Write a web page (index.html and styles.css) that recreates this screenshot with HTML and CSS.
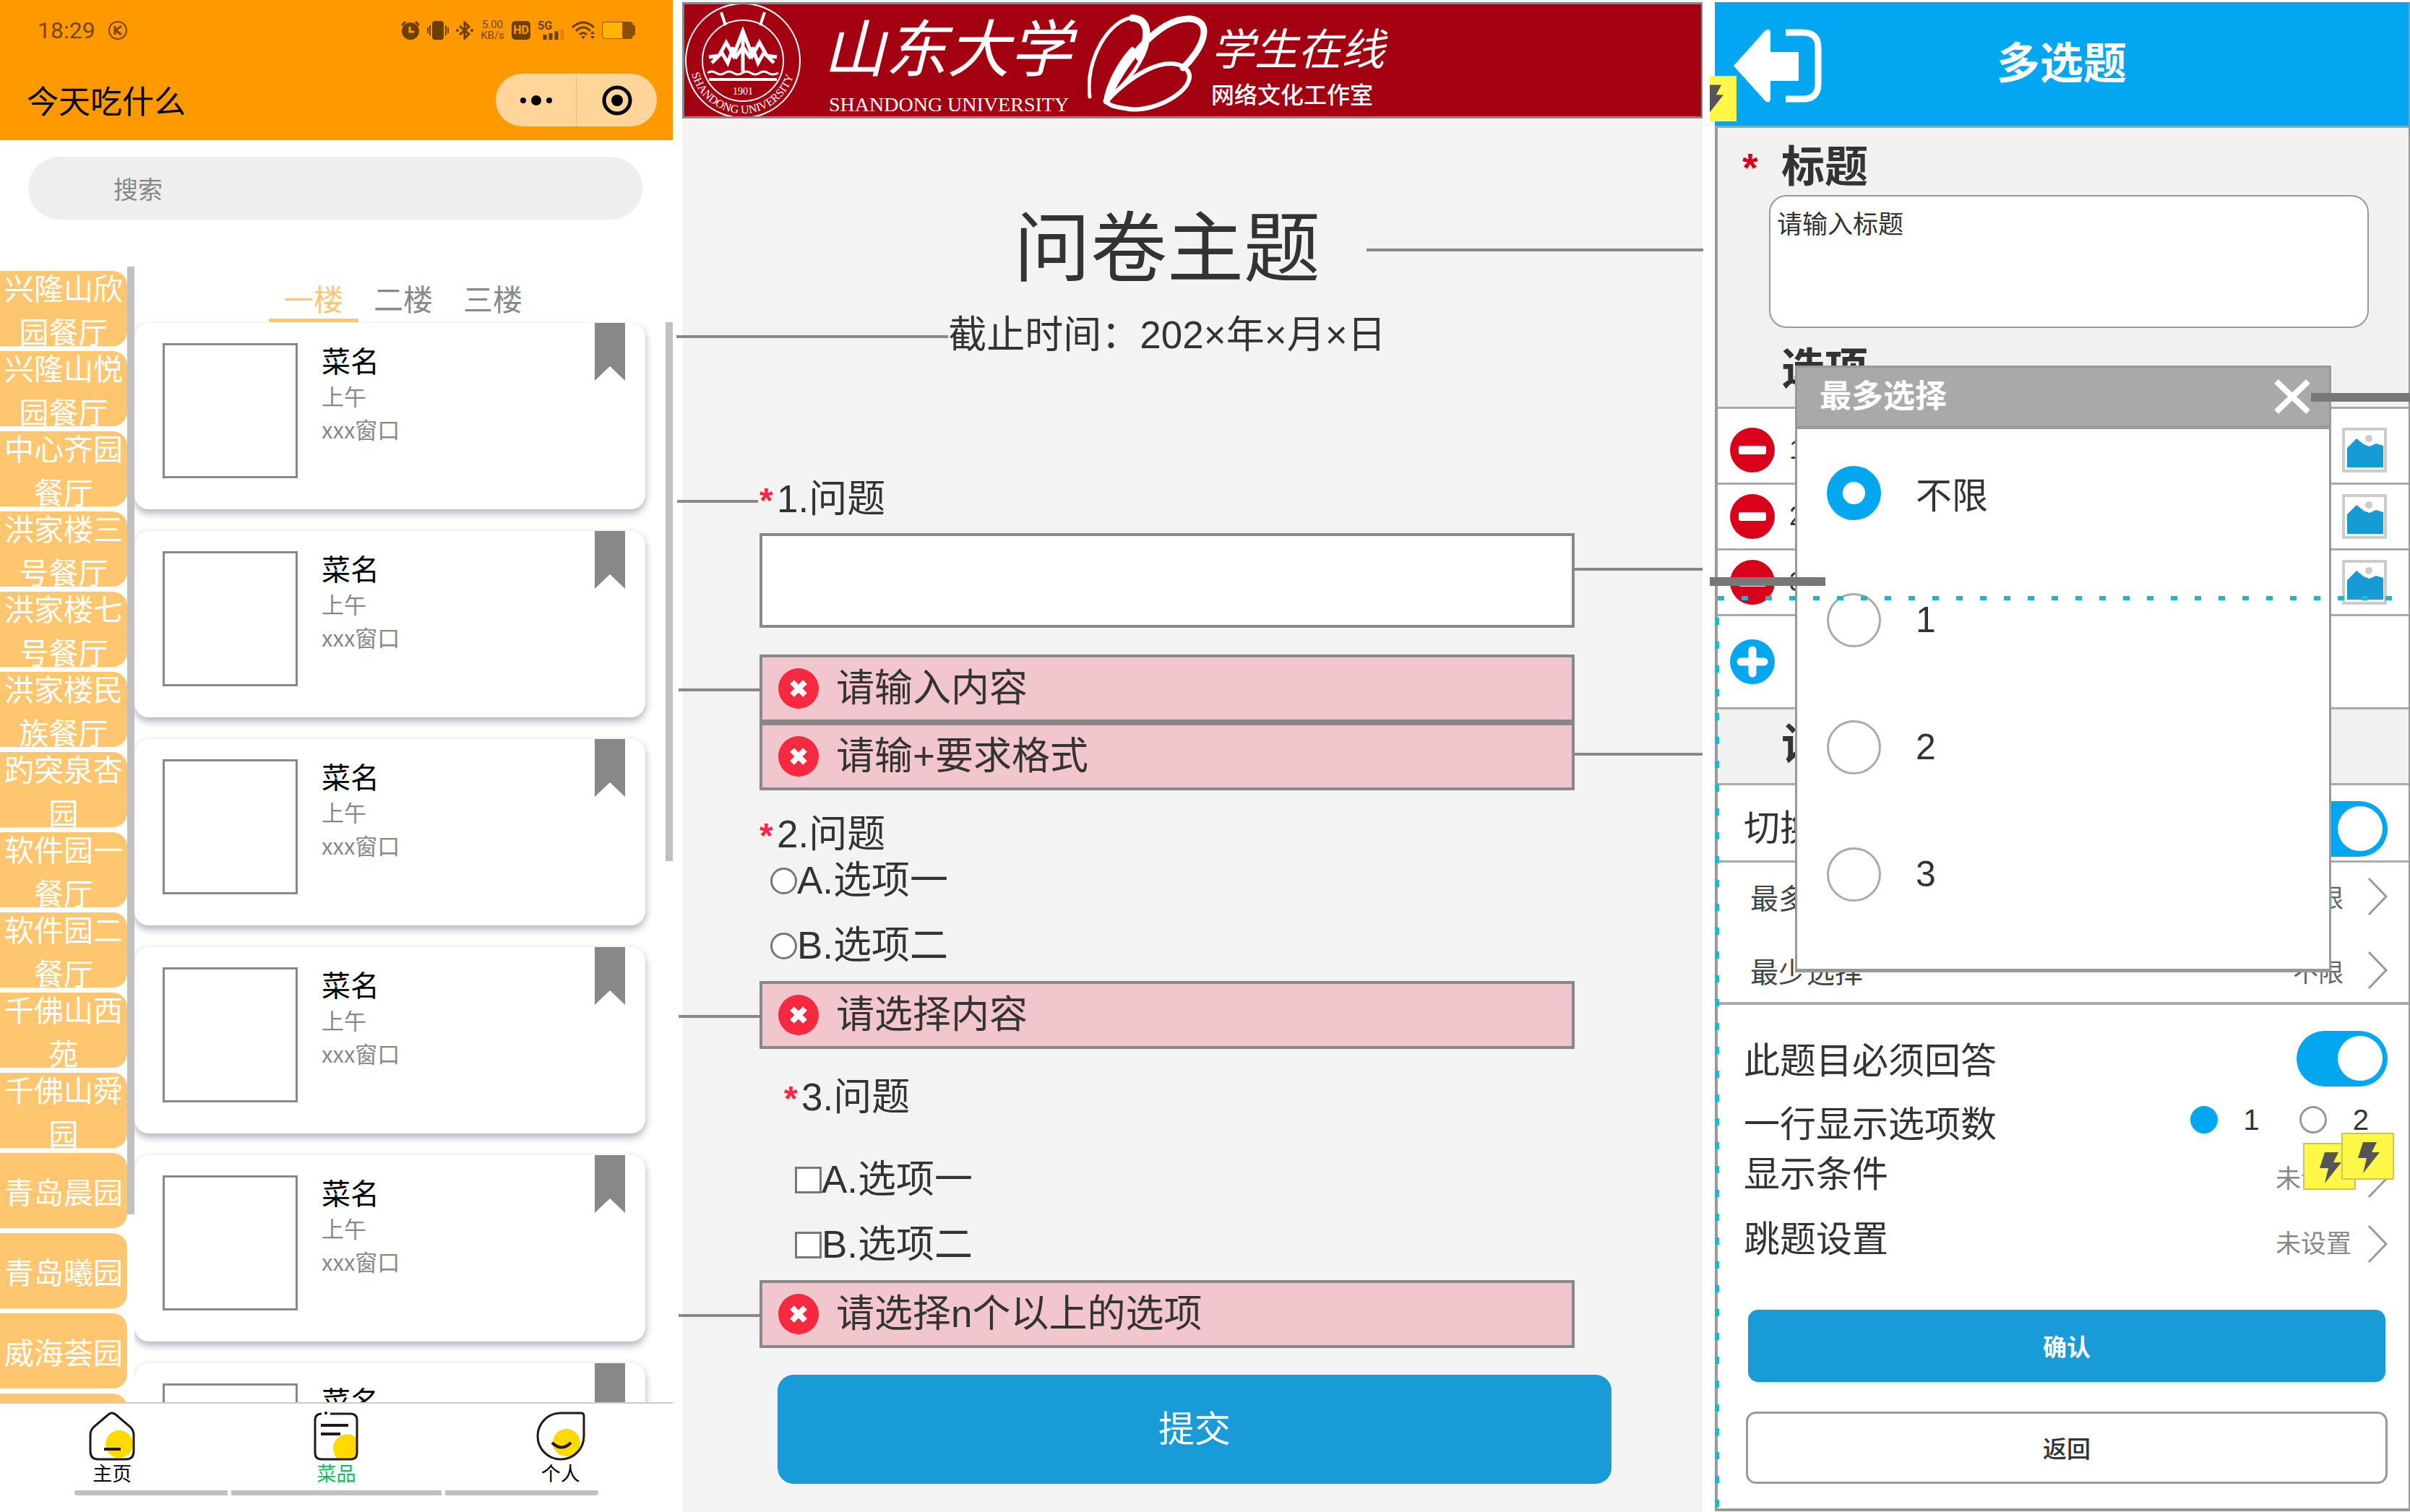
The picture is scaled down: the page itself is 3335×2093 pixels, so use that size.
FILE: index.html
```html
<!DOCTYPE html>
<html lang="zh-CN">
<head>
<meta charset="utf-8">
<title>今天吃什么 · 问卷 · 多选题</title>
<link rel="stylesheet" href="styles.css">
</head>
<body>
<svg class="defs" aria-hidden="true">
  <symbol id="mark" viewBox="0 0 42 80"><path d="M0 0H42V80L21 60L0 80Z" fill="#888"/></symbol>
  <symbol id="error" viewBox="0 0 56 56"><circle cx="28" cy="28" r="28" fill="#f5293f"/><path d="M19 19L37 37M37 19L19 37" stroke="#fff" stroke-width="8"/></symbol>
  <symbol id="minus" viewBox="0 0 62 62"><circle cx="31" cy="31" r="31" fill="#d9001b"/><rect x="12" y="25" width="38" height="12" rx="3" fill="#fff"/></symbol>
  <symbol id="plus" viewBox="0 0 62 62"><circle cx="31" cy="31" r="31" fill="#02a7f0"/><path d="M31 15V47M15 31H47" stroke="#fff" stroke-width="11" stroke-linecap="round"/></symbol>
  <symbol id="picture" viewBox="0 0 62 62"><rect x="2" y="2" width="58" height="58" fill="#fff" stroke="#ccc" stroke-width="4"/><path d="M7 55V28L20 15L30 23L38 26L47 22L57 25V55Z" fill="#169bd5"/><circle cx="37" cy="15" r="5" fill="#ccc"/></symbol>
  <symbol id="chevron" viewBox="0 0 28 52"><path d="M2 1L26 26L2 51" fill="none" stroke="#999" stroke-width="3"/></symbol>
  <symbol id="bolt" viewBox="0 0 73 65"><rect x="1" y="1" width="71" height="63" fill="#fff849" stroke="#c9c46a" stroke-width="2"/><path d="M30 13H49L42 27H53L30 56L35 35H23Z" fill="#555"/></symbol>
</svg>
<main class="board">

  <section class="dining">
    <header class="dining-top">
      <div class="status">
        <span class="clock">18:29</span>
        <svg width="26" height="26" viewBox="0 0 26 26" fill="none" stroke="#7a4500" stroke-width="2"><circle cx="13" cy="13" r="12"/><path d="M9 7V19M18 7L10 13L18 19" stroke-width="3"/></svg>
        <div class="status-icons">
          <svg width="26" height="26" viewBox="0 0 26 26"><circle cx="13" cy="14" r="12" fill="#6e3f00"/><path d="M1 6L6 1M25 6L20 1" stroke="#6e3f00" stroke-width="3"/><path d="M12 8V15H18" fill="none" stroke="#ff9900" stroke-width="3"/></svg>
          <svg width="30" height="26" viewBox="0 0 30 26"><rect x="7" width="16" height="26" rx="4" fill="#6e3f00"/><path d="M1 9V17M4 6V20M26 6V20M29 9V17" stroke="#6e3f00" stroke-width="2"/></svg>
          <svg width="24" height="26" viewBox="0 0 24 26"><path d="M5 7L18 18L12 24V2L18 8L5 19" fill="none" stroke="#6e3f00" stroke-width="3"/><circle cx="2" cy="13" r="2" fill="#6e3f00"/><circle cx="22" cy="13" r="2" fill="#6e3f00"/></svg>
          <span class="speed">5.00<br>KB/s</span>
          <span class="hd">HD</span>
          <svg width="37" height="26" viewBox="0 0 37 26"><text x="0" y="12" font-family="Roboto" font-weight="700" font-size="16" fill="#6e3f00">5G</text><path d="M10 26V19M18 26V17M26 26V14" stroke="#6e3f00" stroke-width="5"/><path d="M34 26V12" stroke="#e67f00" stroke-width="5"/></svg>
          <svg width="32" height="26" viewBox="0 0 32 26" fill="none" stroke="#6e3f00" stroke-width="3"><path d="M1 9Q16 -5 31 9M6 14Q16 4 26 14M11 19Q16 14 21 19"/><path d="M13 21H19L16 25Z" fill="#6e3f00" stroke="none"/><path d="M26 18L29 14L32 18ZM26 21L29 25L32 21Z" fill="#6e3f00" stroke="none"/></svg>
          <svg width="46" height="24" viewBox="0 0 46 24"><path d="M5 0H38Q43 0 43 5H46V19H43Q43 24 38 24H5Q0 24 0 19V5Q0 0 5 0Z" fill="#8c4f00"/><path d="M5 1H28V23H5Q1 23 1 19V5Q1 1 5 1Z" fill="#ffb400"/></svg>
        </div>
      </div>
      <div class="title-row">
        <h1>今天吃什么</h1>
        <div class="capsule">
          <button type="button" aria-label="更多"><svg width="44" height="16" viewBox="0 0 44 16"><circle cx="4" cy="8" r="4"/><circle cx="22" cy="8" r="7"/><circle cx="40" cy="8" r="4"/></svg></button>
          <button type="button" aria-label="关闭"><svg width="42" height="42" viewBox="0 0 42 42"><circle cx="21" cy="21" r="18" fill="none" stroke="#000" stroke-width="5"/><circle cx="21" cy="21" r="8"/></svg></button>
        </div>
      </div>
    </header>
    <input class="search" type="search" placeholder="搜索" aria-label="搜索">
    <div class="menu">
      <nav class="halls">
        <a href="#">兴隆山欣园餐厅</a>
        <a href="#">兴隆山悦园餐厅</a>
        <a href="#">中心齐园餐厅</a>
        <a href="#">洪家楼三号餐厅</a>
        <a href="#">洪家楼七号餐厅</a>
        <a href="#">洪家楼民族餐厅</a>
        <a href="#">趵突泉杏园</a>
        <a href="#">软件园一餐厅</a>
        <a href="#">软件园二餐厅</a>
        <a href="#">千佛山西苑</a>
        <a href="#">千佛山舜园</a>
        <a href="#">青岛晨园</a>
        <a href="#">青岛曦园</a>
        <a href="#">威海荟园</a>
        <a href="#" aria-label="更多餐厅"></a>
      </nav>
      <div class="dishes">
        <div class="tabs">
          <button type="button" class="tab on">一楼</button>
          <button type="button" class="tab">二楼</button>
          <button type="button" class="tab">三楼</button>
        </div>
        <div class="cards">
          <article class="card"><div class="thumb"></div><div><h2>菜名</h2><p>上午</p><p>xxx窗口</p></div><svg class="mark"><use href="#mark"/></svg></article>
          <article class="card"><div class="thumb"></div><div><h2>菜名</h2><p>上午</p><p>xxx窗口</p></div><svg class="mark"><use href="#mark"/></svg></article>
          <article class="card"><div class="thumb"></div><div><h2>菜名</h2><p>上午</p><p>xxx窗口</p></div><svg class="mark"><use href="#mark"/></svg></article>
          <article class="card"><div class="thumb"></div><div><h2>菜名</h2><p>上午</p><p>xxx窗口</p></div><svg class="mark"><use href="#mark"/></svg></article>
          <article class="card"><div class="thumb"></div><div><h2>菜名</h2><p>上午</p><p>xxx窗口</p></div><svg class="mark"><use href="#mark"/></svg></article>
          <article class="card"><div class="thumb"></div><div><h2>菜名</h2><p>上午</p><p>xxx窗口</p></div><svg class="mark"><use href="#mark"/></svg></article>
        </div>
      </div>
    </div>
    <footer class="tabbar">
      <nav>
        <a href="#"><svg width="66" height="70" viewBox="0 0 66 70"><circle cx="43" cy="46" r="19" fill="#ffd900"/><path d="M28 5Q33 1 38 5L58 22Q63 27 63 33V56Q63 67 52 67H14Q3 67 3 56V33Q3 27 8 22Z" fill="none" stroke="#231815" stroke-width="3"/><path d="M22 53H45" stroke="#231815" stroke-width="4"/></svg>主页</a>
        <a href="#" class="on"><svg width="66" height="70" viewBox="0 0 66 70"><path d="M61 37A17 17 0 1 0 36 67H61Z" fill="#ffd900"/><path d="M13 4Q4 4 4 13V58Q4 67 13 67H53Q62 67 62 58V13Q62 4 53 4H25" fill="none" stroke="#231815" stroke-width="3"/><circle cx="19" cy="3" r="2"/><path d="M12 20H50M12 32H39" stroke="#231815" stroke-width="4"/></svg>菜品</a>
        <a href="#"><svg width="68" height="70" viewBox="0 0 68 70"><circle cx="42" cy="44" r="19" fill="#ffd900"/><path d="M62 3Q66 3 66 7V35A32 32 0 1 1 34 3Z" fill="none" stroke="#231815" stroke-width="3"/><path d="M22 44Q35 57 48 44" fill="none" stroke="#231815" stroke-width="4"/></svg>个人</a>
      </nav>
      <div class="bars"><i></i><i></i><i></i></div>
    </footer>
  </section>

  <section class="survey">
    <header class="banner">
      <svg class="seal" width="162" height="162" viewBox="0 0 162 162" fill="none" stroke="#fff">
        <circle cx="81" cy="81" r="79" stroke-width="2"/><circle cx="81" cy="81" r="56" stroke-width="2"/>
        <path id="ring" d="M8 81A73 73 0 0 0 154 81" stroke="none"/>
        <path d="M51 14L57 32M111 14L105 32" stroke-width="4"/>
        <path d="M34 76L48 74L58 56L68 74L81 40L94 74L104 56L114 74L128 76M38 84L52 70L60 84L68 62M124 84L110 70L102 84L94 62M81 40V96M70 78L81 62L92 78" stroke-width="5"/>
        <path d="M32 98Q38 94 44 98T56 98T68 98T80 98T92 98T104 98T116 98T130 98" stroke-width="3"/><path d="M34 107H128" stroke-width="4"/>
        <text x="81" y="128" text-anchor="middle" font-family="Liberation Serif" font-size="14" fill="#fff" stroke="none">1901</text>
        <text font-family="Liberation Serif" font-size="16" fill="#fff" stroke="none"><textPath href="#ring" startOffset="18">SHANDONG UNIVERSITY</textPath></text>
      </svg>
      <div class="wordmark"><strong>山东大学</strong><span>SHANDONG UNIVERSITY</span></div>
      <svg class="swirl" width="168" height="140" viewBox="0 0 168 140" fill="none" stroke="#fff" stroke-linecap="round">
        <path d="M3 116C-4 66 30 6 66 6C92 8 86 44 72 68C58 94 38 108 26 124" stroke-width="5"/>
        <path d="M62 7C90 8 82 42 72 62" stroke-width="10"/>
        <path d="M26 122C44 76 96 6 142 8C178 12 156 54 132 76" stroke-width="9"/>
        <path d="M26 122C60 86 104 60 132 74C166 96 96 142 52 132C38 130 24 128 26 116C32 90 50 62 62 50" stroke-width="6"/>
      </svg>
      <div class="studio"><em>学生在线</em><span>网络文化工作室</span></div>
    </header>
    <form class="form">
      <div class="center"><h1 class="lead note-title">问卷主题</h1></div>
      <div class="center"><p class="note-sub">截止时间：202×年×月×日</p></div>

      <label class="question first note-left" for="q1"><b>*</b>1.问题</label>
      <div class="field note-right"><input id="q1" type="text"></div>
      <p class="error gap note-left"><svg><use href="#error"/></svg>请输入内容</p>
      <p class="error note-right"><svg><use href="#error"/></svg>请输+要求格式</p>

      <p class="question second"><b>*</b>2.问题</p>
      <label class="choice"><input type="radio" name="q2">A.选项一</label>
      <label class="choice spaced"><input type="radio" name="q2">B.选项二</label>
      <p class="error tight note-left"><svg><use href="#error"/></svg>请选择内容</p>

      <p class="question third"><b>*</b>3.问题</p>
      <label class="choice inset far"><input type="checkbox">A.选项一</label>
      <label class="choice inset spaced"><input type="checkbox">B.选项二</label>
      <p class="error tight note-left"><svg><use href="#error"/></svg>请选择n个以上的选项</p>
    </form>
    <button type="submit" class="submit">提交</button>
  </section>

  <section class="editor">
    <header class="editor-top">
      <button type="button" class="back" aria-label="退出"><svg width="126" height="106" viewBox="0 0 126 106"><path d="M2 53L46 4Q53 0 53 8V34H92V74H53V98Q53 106 46 102Z" fill="#fff"/><path d="M74 7H98Q119 7 119 28V78Q119 99 98 99H74" fill="none" stroke="#fff" stroke-width="9"/></svg></button>
      <h1>多选题</h1>
      <svg class="bolt bolt-top" viewBox="36 0 37 65" preserveAspectRatio="none"><rect x="36" width="37" height="65" fill="#fff849"/><path d="M36 13H52L45 27H55L36 52Z" fill="#555"/></svg>
    </header>
    <div class="block">
      <label class="heading" for="title"><b>*</b>标题</label>
      <textarea id="title">请输入标题</textarea>
      <h2 class="heading options">选项</h2>
    </div>
    <div class="option tall"><svg><use href="#minus"/></svg><span>1</span><svg><use href="#picture"/></svg></div>
    <div class="option"><svg><use href="#minus"/></svg><span>2</span><svg><use href="#picture"/></svg></div>
    <div class="option"><svg><use href="#minus"/></svg><span>3</span><svg><use href="#picture"/></svg></div>
    <div class="option add"><svg><use href="#plus"/></svg></div>
    <h2 class="heading settings">设置</h2>
    <label class="row line"><span>切换</span><input class="toggle" type="checkbox" checked></label>
    <div class="limits">
      <a href="#" class="limit"><span>最多选择</span><small>不限</small><svg><use href="#chevron"/></svg></a>
      <a href="#" class="limit"><span>最少选择</span><small>不限</small><svg><use href="#chevron"/></svg></a>
    </div>
    <div class="extras">
      <label class="row"><span>此题目必须回答</span><input class="toggle" type="checkbox" checked></label>
      <div class="row"><span>一行显示选项数</span>
        <div class="per-line"><label><input type="radio" name="cols" checked>1</label><label><input type="radio" name="cols">2</label></div>
      </div>
      <a href="#" class="row link"><span>显示条件</span><small>未设置</small><svg><use href="#chevron"/></svg>
        <svg class="bolt bolt-a"><use href="#bolt"/></svg><svg class="bolt bolt-b"><use href="#bolt"/></svg></a>
      <a href="#" class="row link last"><span>跳题设置</span><small>未设置</small><svg><use href="#chevron"/></svg></a>
      <button type="button" class="confirm">确认</button>
      <button type="button" class="return">返回</button>
    </div>

    <div class="dialog" role="dialog" aria-label="最多选择">
      <header><h2>最多选择</h2><button type="button" aria-label="关闭"><svg width="52" height="50" viewBox="0 0 52 50"><path d="M4 4L48 46M48 4L4 46" stroke="#fff" stroke-width="8"/></svg></button></header>
      <label><input type="radio" name="max" checked>不限</label>
      <label><input type="radio" name="max">1</label>
      <label><input type="radio" name="max">2</label>
      <label><input type="radio" name="max">3</label>
    </div>
    <i class="guide-x"></i><i class="guide-y"></i>
    <i class="callout callout-left"></i><i class="callout callout-right"></i>
  </section>
</main>
</body>
</html>
```
FILE: styles.css
```css
* { box-sizing: border-box; margin: 0; padding: 0; }
body { background: #fff; color: #333; font-family: "Liberation Sans", "Noto Sans CJK SC", sans-serif; overflow: hidden; }
button, input, textarea { font: inherit; color: inherit; border: 0; background: none; appearance: none; outline: 0; }
a { color: inherit; text-decoration: none; }
svg { display: block; flex: none; }
.defs { position: absolute; width: 0; height: 0; }
.board { display: grid; grid-template-columns: 931fr 1412fr 966fr; column-gap: 13px; min-height: 100vh; }

/* canteen app */
.dining { height: 100vh; display: flex; flex-direction: column; font-family: "Noto Sans CJK SC", sans-serif; }
.dining-top { height: 194px; background: #ff9900; }
.status { display: flex; align-items: center; gap: 18px; padding: 24px 52px 0; height: 59px; color: #7a4500; }
.clock { font: 32px/36px Roboto, sans-serif; }
.status-icons { margin-left: auto; display: flex; align-items: center; gap: 10px; }
.speed { width: 33px; font: 15px/15px Roboto, sans-serif; text-align: center; }
.hd { width: 26px; height: 26px; border-radius: 5px; background: #6e3f00; color: #ff9900; font: 700 16px/26px Roboto, sans-serif; text-align: center; }
.title-row { display: flex; align-items: center; justify-content: space-between; padding: 43px 22px 0 37px; color: #000; }
.title-row h1 { font-size: 44px; line-height: 73px; font-weight: 400; }
.capsule { display: flex; width: 223px; height: 73px; border-radius: 37px; background: #ffd599; }
.capsule button { flex: 1; display: grid; place-items: center; }
.capsule button + button { border-left: 1px solid #e8bd80; }
.search { margin: 23px 42px 65px 39px; height: 87px; flex: none; border-radius: 44px; background: #eee; padding-left: 118px; font-size: 34px; color: #888; }
.search::placeholder { color: #888; opacity: 1; }
.menu { flex: 1; min-height: 0; display: flex; }
.halls { position: relative; width: 186px; overflow: hidden; padding: 6px 10px 0 0; display: flex; flex-direction: column; gap: 7px; }
.halls::after { content: ""; position: absolute; right: 0; top: 0; width: 10px; height: 1312px; background: #c0c0c0; }
.halls a { flex: none; height: 104px; overflow: hidden; display: flex; align-items: center; justify-content: center; padding: 0 5px; border-radius: 0 20px 20px 0; background: #ffc670; color: #fff; font-size: 41px; line-height: 60px; text-align: center; }
.dishes { flex: 1; min-width: 0; display: flex; flex-direction: column; }
.tabs { display: flex; padding: 14px 0 0 186px; height: 77px; }
.tab { width: 124px; font-size: 41px; line-height: 58px; color: #888; border-bottom: 5px solid transparent; }
.tab.on { color: #ffc670; border-color: #ffc670; }
.cards { position: relative; flex: 1; min-height: 0; overflow: hidden; padding: 1px 38px 0 0; }
.cards::after { content: ""; position: absolute; right: 0; top: 0; width: 10px; height: 746px; background: #c0c0c0; }
.card { position: relative; height: 258px; margin-bottom: 30px; border-radius: 20px; background: #fff; box-shadow: 0 5px 12px #a8aebb; display: flex; gap: 33px; padding: 24px 39px; }
.thumb { width: 187px; height: 187px; margin-top: 4px; border: 3px solid #888; }
.card h2 { color: #000; font-size: 40px; line-height: 54px; font-weight: 400; }
.card p { color: #888; font-size: 31px; line-height: 46px; }
.mark { position: absolute; top: 0; right: 28px; width: 42px; height: 80px; }
.tabbar { position: relative; height: 152px; border-top: 2px solid #ccc; background: #fff; }
.tabbar nav { display: flex; padding-top: 10px; }
.tabbar a { flex: 1; display: flex; flex-direction: column; align-items: center; font-size: 27px; line-height: 32px; color: #000; }
.tabbar a.on { color: #07c160; }
.bars { display: grid; grid-template-columns: 212fr 291fr 212fr; gap: 5px; padding: 8px 103px 0; }
.bars i { height: 7px; background: #c0c0c0; }
.bars i:first-child { border-radius: 4px 0 0 4px; }
.bars i:last-child { border-radius: 0 4px 4px 0; }

/* questionnaire */
.survey { background: #f3f3f3; padding-top: 3px; font-size: 53px; line-height: 62px; }
.banner { display: flex; height: 161px; overflow: hidden; background: #a30011; border: 3px solid #888; border-right-width: 2px; color: #fff; }
.seal { margin-top: -3px; }
.wordmark { width: 360px; margin-left: 30px; padding-top: 6px; white-space: nowrap; }
.wordmark strong { display: block; font-size: 86px; line-height: 114px; font-style: italic; font-weight: 400; }
.wordmark span { display: block; padding-left: 8px; font: 28px/38px "Liberation Serif", serif; }
.swirl { margin: 12px 3px 0 6px; }
.studio { padding-top: 24px; white-space: nowrap; }
.studio em { display: block; font-size: 60px; line-height: 80px; font-weight: 400; }
.studio span { display: block; font-size: 32px; line-height: 44px; font-weight: 500; }
.form { padding: 119px 177px 0 107px; }
.center { display: flex; justify-content: center; }
.lead { font-size: 106px; line-height: 122px; font-weight: 400; margin-bottom: 28px; }
.note-title, .note-sub, .note-left, .note-right { position: relative; }
.note-title::after, .note-sub::before, .note-left::before, .note-right::after { content: ""; position: absolute; top: 50%; height: 4px; background: #888; }
.note-title::after { left: calc(100% + 64px); width: 466px; }
.note-sub::before { right: 100%; width: 376px; }
.note-left::before { right: calc(100% + 2px); width: 112px; }
.note-right::after { left: 100%; width: 177px; }
.question { display: block; }
.question b { display: inline-block; width: 24px; color: #f5293f; font-size: 48px; }
.first { margin-top: 165px; }
.second { margin-top: 30px; }
.third { margin: 36px 0 0 34px; }
.field { margin-top: 14px; height: 131px; }
.field input { display: block; width: 100%; height: 100%; padding: 0 20px; background: #fff; border: 4px solid #888; }
.field.note-right::after { top: 37%; }
.error { height: 94px; display: flex; align-items: center; gap: 24px; padding-left: 22px; background: #f2c6cd; border: 4px solid #888; }
.error svg { width: 56px; height: 56px; }
.error.note-left::before { right: calc(100% + 4px); }
.error.note-right::after { left: calc(100% + 4px); top: 44%; }
.gap { margin-top: 37px; }
.tight { margin-top: 18px; }
.choice { display: flex; align-items: center; padding-left: 15px; }
.choice input { width: 37px; height: 37px; border: 3px solid #777; background: #fff; }
.choice input[type="radio"] { border-radius: 50%; }
.inset { padding-left: 49px; }
.far { margin-top: 50px; }
.spaced { margin-top: 28px; }
.submit { display: block; width: calc(100% - 258px); height: 151px; margin: 37px 0 0 132px; border-radius: 22px; background: #189bd7; color: #fff; font-size: 50px; }

/* question editor */
.editor { position: relative; margin: 3px 0 0 4px; border: solid #999; border-width: 0 2px 4px 4px; font-size: 50px; align-self: start; }
.editor-top { position: relative; height: 174px; margin-left: -4px; background: #03a7f1; border-bottom: 3px solid #8ab; display: grid; place-items: center; color: #fff; }
.editor-top h1 { font-size: 60px; line-height: 70px; }
.back { position: absolute; left: 24px; top: 35px; }
.bolt { position: absolute; width: 73px; height: 65px; }
.bolt-top { left: -7px; top: 102px; width: 37px; height: 63px; }
.block { background: #f1f1f1; padding: 20px 55px 15px 71px; height: 386px; }
.heading { display: flex; font-size: 60px; line-height: 70px; font-weight: 700; padding-left: 17px; }
.heading b { width: 54px; margin-left: -54px; color: #d9001b; font-size: 56px; }
.block textarea { display: block; width: 100%; height: 184px; margin-top: 3px; padding: 18px 9px; border: 2px solid #999; border-radius: 24px; background: #fff; resize: none; font-size: 35px; line-height: 42px; }
.options { margin-top: 23px; }
.option { height: 91px; display: flex; align-items: center; padding: 0 30px 0 17px; border-top: 3px solid #aaa; background: #fff; font-size: 36px; }
.option svg { width: 62px; height: 62px; }
.option span { flex: 1; padding-left: 20px; }
.tall { height: 105px; padding-top: 12px; }
.add { height: 129px; }
.settings { height: 108px; padding: 15px 0 0 88px; background: #f1f1f1; border: solid #aaa; border-width: 3px 0; }
.row { display: flex; align-items: center; justify-content: space-between; height: 88px; padding: 0 29px 0 36px; line-height: 50px; }
.line { height: 107px; padding-top: 16px; border-bottom: 3px solid #aaa; }
.toggle { width: 126px; height: 77px; border-radius: 39px; background: #02a7f0; display: flex; align-items: center; justify-content: flex-end; padding-right: 7px; }
.toggle::before { content: ""; width: 62px; height: 62px; border-radius: 50%; background: #fff; }
.limits { height: 197px; padding-top: 3px; border-bottom: 4px solid #aaa; display: flex; flex-direction: column; gap: 15px; }
.limit { display: flex; align-items: center; height: 88px; padding: 0 29px 0 45px; font-size: 39px; color: #444; }
.limit span, .link span { flex: 1; }
.limit svg, .link > svg:not(.bolt) { width: 28px; height: 52px; }
.limit small { font-size: 35px; color: #666; padding-right: 33px; }
.extras { padding: 34px 0; }
.extras .toggle { margin-bottom: 8px; }
.link { position: relative; height: 50px; }
.link small { font-size: 35px; color: #888; padding: 12px 22px 0 0; }
.link > svg:not(.bolt) { margin-top: 12px; }
.last { margin-top: 40px; }
.bolt-a { right: 73px; top: -19px; }
.bolt-b { right: 20px; top: -33px; }
.per-line { display: flex; gap: 55px; padding: 0 26px 14px 0; font-size: 40px; }
.per-line label { display: flex; align-items: center; gap: 36px; }
.per-line input { width: 38px; height: 38px; border-radius: 50%; border: 3px solid #999; background: #fff; }
.per-line input:checked { background: #02a7f0; border-color: #02a7f0; }
.confirm, .return { display: block; width: calc(100% - 74px); margin-left: 42px; height: 100px; border-radius: 14px; font-size: 33px; }
.confirm { margin-top: 72px; background: #189bd7; color: #fff; font-weight: 700; }
.return { width: calc(100% - 68px); margin: 41px 0 0 39px; border: 3px solid #999; background: #fff; font-weight: 500; }
.dialog { position: absolute; left: 107px; right: 107px; top: 503px; height: 840px; background: #fff; border: 3px solid #999; border-bottom-width: 5px; }
.dialog header { display: flex; align-items: center; justify-content: space-between; height: 85px; padding: 0 25px 0 31px; background: #a9a9a9; border-bottom: 5px solid #999; color: #fff; }
.dialog h2 { font-size: 44px; line-height: 60px; }
.dialog label { display: flex; align-items: center; gap: 48px; height: 176px; padding-left: 41px; }
.dialog input { width: 75px; height: 75px; border: 3px solid #aaa; border-radius: 50%; }
.dialog input:checked { border: 22px solid #02a7f0; }
.guide-x, .guide-y, .callout { position: absolute; }
.guide-x { left: 0; right: 16px; top: 822px; height: 6px; background: repeating-linear-gradient(90deg, #1cb8cc 0 9px, transparent 9px 33px); }
.guide-y { left: -4px; top: 852px; bottom: 0; width: 6px; background: repeating-linear-gradient(#1cb8cc 0 10px, transparent 10px 33px); }
.callout { height: 12px; background: #777; }
.callout-left { left: -11px; width: 160px; top: 796px; }
.callout-right { right: -2px; width: 137px; top: 541px; }
```
